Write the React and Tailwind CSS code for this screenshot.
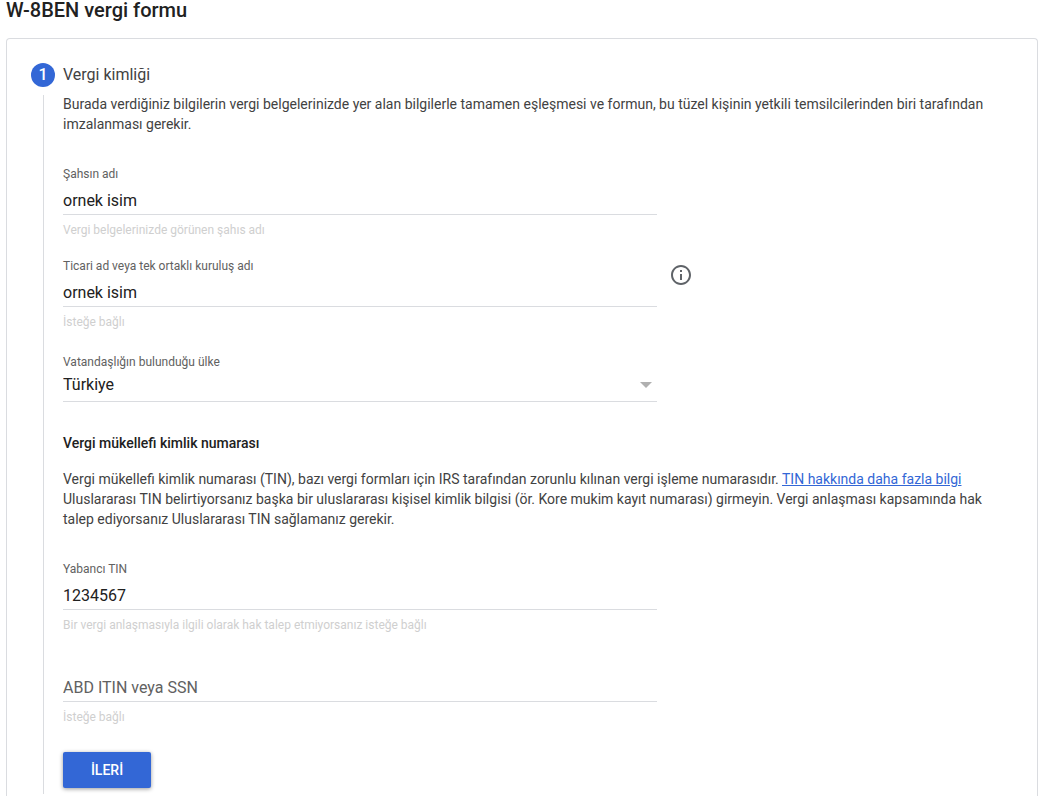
import { useState } from 'react';

const inputClass =
  'block w-full h-[33px] pt-1 border-b border-[#dadce0] bg-transparent text-base text-[#212121] placeholder:text-[#616161] placeholder:opacity-100 outline-none focus:border-[#3367d6]';

function TextField({ id, label, hint, value, onChange, floating }) {
  return (
    <div className={floating ? 'w-full max-w-[594px] pt-4' : 'w-full max-w-[594px]'}>
      {!floating && (
        <label htmlFor={id} className="block text-xs leading-4 text-[#616161]">
          {label}
        </label>
      )}
      <input
        id={id}
        type="text"
        className={inputClass}
        value={value}
        onChange={onChange}
        placeholder={floating ? label : undefined}
        aria-label={floating ? label : undefined}
        aria-describedby={`${id}-hint`}
      />
      <p id={`${id}-hint`} className="mt-[7px] text-xs leading-4 text-[#cfcfcf]">
        {hint}
      </p>
    </div>
  );
}

function InfoIcon() {
  return (
    <svg viewBox="0 0 24 24" className="size-6" fill="#5f6368" aria-hidden="true">
      <path d="M11 7h2v2h-2zm0 4h2v6h-2zm1-9C6.48 2 2 6.48 2 12s4.48 10 10 10 10-4.48 10-10S17.52 2 12 2zm0 18c-4.41 0-8-3.59-8-8s3.59-8 8-8 8 3.59 8 8-3.59 8-8 8z" />
    </svg>
  );
}

export default function App() {
  const [form, setForm] = useState({
    name: 'ornek isim',
    business: 'ornek isim',
    country: 'TR',
    foreignTin: '1234567',
    usTin: '',
  });

  const update = (key) => (e) => setForm({ ...form, [key]: e.target.value });

  return (
    <main className="bg-white pl-[6px] pr-1 font-['Roboto',sans-serif] text-[#212121]">
      <h1 className="text-xl leading-5 font-medium">W-8BEN vergi formu</h1>

      <section className="mt-[18px] rounded-t border border-b-0 border-[#dadce0] px-6 pt-6 pb-[2px]">
        <div className="flex gap-2">
          <div className="flex flex-col items-center gap-2">
            <span className="flex size-6 items-center justify-center rounded-full bg-[#3367d6] text-base font-medium text-white">
              1
            </span>
            <span className="w-px grow bg-[#dadce0]" />
          </div>

          <form className="min-w-0 grow pb-[6px]" onSubmit={(e) => e.preventDefault()}>
            <h2 className="text-base leading-6 text-[#424242]">Vergi kimliği</h2>
            <p className="mt-[7px] text-sm leading-5 text-[#424242]">
              Burada verdiğiniz bilgilerin vergi belgelerinizde yer alan bilgilerle tamamen eşleşmesi ve formun, bu
              tüzel kişinin yetkili temsilcilerinden biri tarafından imzalanması gerekir.
            </p>

            <div className="mt-8 flex flex-col gap-5">
              <TextField
                id="name"
                label="Şahsın adı"
                hint="Vergi belgelerinizde görünen şahıs adı"
                value={form.name}
                onChange={update('name')}
              />
              <div className="flex items-start gap-3">
                <TextField
                  id="business"
                  label="Ticari ad veya tek ortaklı kuruluş adı"
                  hint="İsteğe bağlı"
                  value={form.business}
                  onChange={update('business')}
                />
                <button type="button" className="mt-[5px] shrink-0" aria-label="Bilgi">
                  <InfoIcon />
                </button>
              </div>
            </div>

            <div className="mt-6 w-full max-w-[594px]">
              <label htmlFor="country" className="block text-xs leading-4 text-[#616161]">
                Vatandaşlığın bulunduğu ülke
              </label>
              <div className="relative">
                <select
                  id="country"
                  className="block h-8 w-full appearance-none border-b border-[#dadce0] bg-transparent pb-[2px] text-base text-[#212121] outline-none"
                  value={form.country}
                  onChange={update('country')}
                >
                  <option value="TR">Türkiye</option>
                </select>
                <svg
                  viewBox="0 0 12 6"
                  className="pointer-events-none absolute top-3 right-[5px] h-[6px] w-3"
                  fill="#b0b0b0"
                  aria-hidden="true"
                >
                  <path d="M0 0h12L6 6z" />
                </svg>
              </div>
            </div>

            <h3 className="mt-[31px] text-sm leading-5 font-medium">Vergi mükellefi kimlik numarası</h3>
            <p className="mt-4 text-sm leading-5 text-[#424242]">
              Vergi mükellefi kimlik numarası (TIN), bazı vergi formları için IRS tarafından zorunlu kılınan vergi
              işleme numarasıdır.{' '}
              <a href="#" className="text-[#3367d6] underline">
                TIN hakkında daha fazla bilgi
              </a>{' '}
              Uluslararası TIN belirtiyorsanız başka bir uluslararası kişisel kimlik bilgisi (ör. Kore mukim kayıt
              numarası) girmeyin. Vergi anlaşması kapsamında hak talep ediyorsanız Uluslararası TIN sağlamanız gerekir.
            </p>

            <div className="mt-8 flex flex-col gap-5">
              <TextField
                id="foreign-tin"
                label="Yabancı TIN"
                hint="Bir vergi anlaşmasıyla ilgili olarak hak talep etmiyorsanız isteğe bağlı"
                value={form.foreignTin}
                onChange={update('foreignTin')}
              />
              <TextField
                id="us-tin"
                label="ABD ITIN veya SSN"
                hint="İsteğe bağlı"
                value={form.usTin}
                onChange={update('usTin')}
                floating
              />
            </div>

            <button
              type="submit"
              className="mt-[27px] block h-9 min-w-[88px] rounded-xs bg-[#3367d6] px-4 text-sm font-medium text-white shadow-[0_1px_4px_rgba(0,0,0,0.4)]"
            >
              İLERİ
            </button>
          </form>
        </div>
      </section>
    </main>
  );
}
